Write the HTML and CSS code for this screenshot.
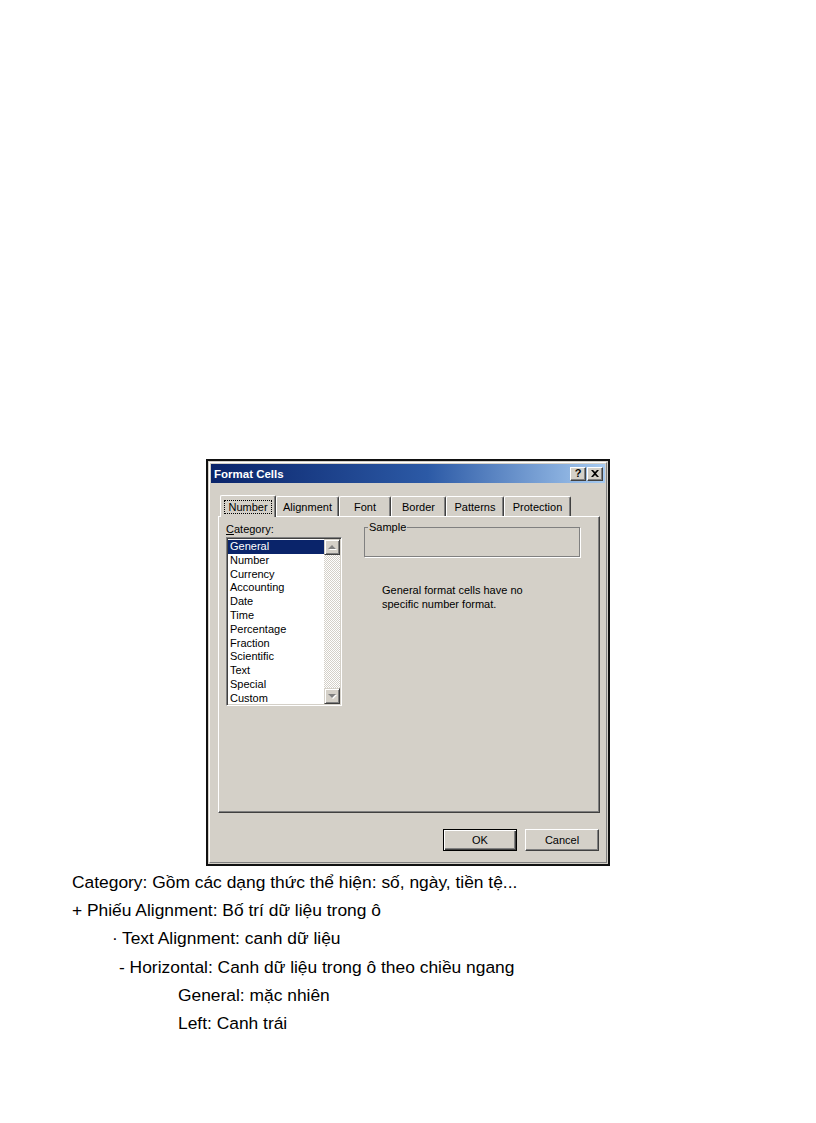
FILE: index.html
```html
<!DOCTYPE html>
<html lang="vi">
<head>
<meta charset="utf-8">
<title>Format Cells</title>
<link rel="stylesheet" href="styles.css">
</head>
<body>
<div class="page">
  <div class="dialog">
    <div class="frame">
      <div class="titlebar">
        <span class="title">Format Cells</span>
        <div class="tbtns">
          <span class="tbtn help">?</span>
          <span class="tbtn close"><svg width="8" height="7" viewBox="0 0 8 7"><path d="M0 0h2l2 2 2-2h2L5 3.5 8 7H6L4 5 2 7H0l3-3.5z" fill="#000"/></svg></span>
        </div>
      </div>
      <div class="body">
        <div class="tabs">
          <div class="tab active w-number"><span class="focus">Number</span></div>
          <div class="tab w-align">Alignment</div>
          <div class="tab w-font">Font</div>
          <div class="tab w-border">Border</div>
          <div class="tab w-patterns">Patterns</div>
          <div class="tab w-protect">Protection</div>
        </div>
        <div class="panel">
          <div class="col-left">
            <div class="label"><u>C</u>ategory:</div>
            <div class="listbox">
              <ul class="items">
                <li class="sel">General</li>
                <li>Number</li>
                <li>Currency</li>
                <li>Accounting</li>
                <li>Date</li>
                <li>Time</li>
                <li>Percentage</li>
                <li>Fraction</li>
                <li>Scientific</li>
                <li>Text</li>
                <li>Special</li>
                <li>Custom</li>
              </ul>
              <div class="scroll">
                <div class="arrow"><span class="tri up"></span></div>
                <div class="track"></div>
                <div class="arrow"><span class="tri down"></span></div>
              </div>
            </div>
          </div>
          <div class="col-right">
            <fieldset class="sample"><legend>Sample</legend></fieldset>
            <p class="desc">General format cells have no<br>specific number format.</p>
          </div>
        </div>
        <div class="buttons">
          <div class="btn default">OK</div>
          <div class="btn">Cancel</div>
        </div>
      </div>
    </div>
  </div>
  <div class="notes">
    <p class="l0">Category: Gồm các dạng thức thể hiện: số, ngày, tiền tệ...</p>
    <p class="l0">+ Phiếu Alignment: Bố trí dữ liệu trong ô</p>
    <p class="l1"><span class="dot">·</span>Text Alignment: canh dữ liệu</p>
    <p class="l2">- Horizontal: Canh dữ liệu trong ô theo chiều ngang</p>
    <p class="l3">General: mặc nhiên</p>
    <p class="l3">Left: Canh trái</p>
  </div>
</div>
</body>
</html>
```
FILE: styles.css
```css
html, body {
  margin: 0;
  padding: 0;
  background: #fff;
}
.page {
  padding-top: 459px;
}
.dialog {
  margin-left: 206px;
  width: 404px;
  height: 407px;
  box-sizing: border-box;
  border: 2px solid #111;
  background: #d4d0c8;
  font-family: "Liberation Sans", Arial, sans-serif;
  font-size: 11px;
  color: #000;
}
.frame {
  margin: 1px;
  height: calc(100% - 2px);
  box-sizing: border-box;
  border-top: 1px solid #fff;
  border-left: 1px solid #fff;
  border-right: 1px solid #808080;
  border-bottom: 1px solid #808080;
  padding: 1px;
  display: flex;
  flex-direction: column;
}
.titlebar {
  height: 19px;
  display: flex;
  align-items: center;
  justify-content: space-between;
  padding: 0 2px 0 3px;
  background: linear-gradient(to right, #0a246a 0%, #2c5aa6 55%, #a6caf0 100%);
}
.title {
  color: #fff;
  font-weight: bold;
  font-size: 11.5px;
}
.tbtns {
  display: flex;
  gap: 1px;
}
.tbtn {
  width: 16px;
  height: 14px;
  box-sizing: border-box;
  background: #d4d0c8;
  border-top: 1px solid #fff;
  border-left: 1px solid #fff;
  border-right: 1px solid #404040;
  border-bottom: 1px solid #404040;
  box-shadow: inset -1px -1px 0 #808080;
  display: flex;
  align-items: center;
  justify-content: center;
  font-weight: bold;
  font-size: 11px;
  line-height: 1;
}
.body {
  padding: 12px 0 0 7px;
}
.tabs {
  display: flex;
  margin-left: 2px;
  height: 21px;
  align-items: flex-end;
  position: relative;
  z-index: 1;
}
.tab {
  height: 20px;
  box-sizing: border-box;
  border-top: 1px solid #fff;
  border-left: 1px solid #fff;
  border-right: 1px solid #404040;
  border-radius: 2px 2px 0 0;
  box-shadow: inset -1px 0 0 #808080;
  display: flex;
  align-items: center;
  justify-content: center;
  padding-top: 1px;
}
.tab.active {
  height: 22px;
  margin-bottom: -1px;
  background: #d4d0c8;
}
.focus {
  border: 1px dotted #000;
  padding: 0 3px;
  line-height: 12px;
}
.w-number { width: 56px; }
.w-align { width: 63px; }
.w-font { width: 52px; }
.w-border { width: 55px; }
.w-patterns { width: 58px; }
.w-protect { width: 67px; }
.panel {
  width: 382px;
  height: 297px;
  box-sizing: border-box;
  border-top: 1px solid #fff;
  border-left: 1px solid #fff;
  border-right: 1px solid #404040;
  border-bottom: 1px solid #404040;
  box-shadow: inset -1px -1px 0 #808080;
  display: flex;
}
.col-left {
  padding: 6px 0 0 7px;
  width: 116px;
}
.label {
  height: 13px;
  line-height: 13px;
  margin-bottom: 1px;
}
.listbox {
  width: 116px;
  height: 169px;
  box-sizing: border-box;
  border-top: 1px solid #808080;
  border-left: 1px solid #808080;
  border-right: 1px solid #fff;
  border-bottom: 1px solid #fff;
  box-shadow: inset 1px 1px 0 #404040, inset -1px -1px 0 #d4d0c8;
  background: #fff;
  padding: 1px;
  display: flex;
}
.items {
  list-style: none;
  margin: 0;
  padding: 1px 0 0;
  flex: 1;
}
.items li {
  height: 13.8px;
  line-height: 13.8px;
  padding-left: 2px;
}
.items li.sel {
  background: #0a246a;
  color: #fff;
}
.scroll {
  width: 16px;
  display: flex;
  flex-direction: column;
}
.arrow {
  width: 16px;
  height: 16px;
  box-sizing: border-box;
  background: #d4d0c8;
  border-top: 1px solid #d4d0c8;
  border-left: 1px solid #d4d0c8;
  border-right: 1px solid #404040;
  border-bottom: 1px solid #404040;
  box-shadow: inset 1px 1px 0 #fff, inset -1px -1px 0 #808080;
  display: flex;
  align-items: center;
  justify-content: center;
}
.tri {
  width: 0;
  height: 0;
  border-left: 4px solid transparent;
  border-right: 4px solid transparent;
  filter: drop-shadow(1px 1px 0 #fff);
}
.tri.up {
  border-bottom: 4px solid #808080;
}
.tri.down {
  border-top: 4px solid #808080;
}
.track {
  flex: 1;
  background-color: #fff;
  background-image: repeating-conic-gradient(#d4d0c8 0 25%, #fff 0 50%);
  background-size: 2px 2px;
}
.col-right {
  margin-left: 22px;
  padding-top: 4px;
}
.sample {
  margin: 0;
  padding: 0;
  width: 216px;
  height: 36px;
  box-sizing: border-box;
  border: 1px solid #808080;
  box-shadow: 1px 1px 0 #fff;
}
.sample legend {
  padding: 0 1px;
  margin-left: 3px;
  line-height: 13px;
}
.desc {
  margin: 26px 0 0 18px;
  line-height: 14px;
}
.buttons {
  width: 381px;
  display: flex;
  justify-content: flex-end;
  gap: 8px;
  margin-top: 16px;
}
.btn {
  width: 74px;
  height: 22px;
  box-sizing: border-box;
  border-top: 1px solid #fff;
  border-left: 1px solid #fff;
  border-right: 1px solid #404040;
  border-bottom: 1px solid #404040;
  box-shadow: inset -1px -1px 0 #808080;
  display: flex;
  align-items: center;
  justify-content: center;
}
.btn.default {
  border: 1px solid #000;
  box-shadow: inset 1px 1px 0 #fff, inset -1px -1px 0 #404040, inset -2px -2px 0 #808080;
}
.notes {
  margin-top: 2px;
  padding-left: 72px;
  font-family: "Liberation Sans", Arial, sans-serif;
  font-size: 17.4px;
  line-height: 28.2px;
  color: #000;
}
.notes p {
  margin: 0;
}
.l1 {
  padding-left: 40px;
}
.dot {
  display: inline-block;
  width: 10px;
}
.l2 {
  padding-left: 47px;
}
.l3 {
  padding-left: 106px;
}
```
